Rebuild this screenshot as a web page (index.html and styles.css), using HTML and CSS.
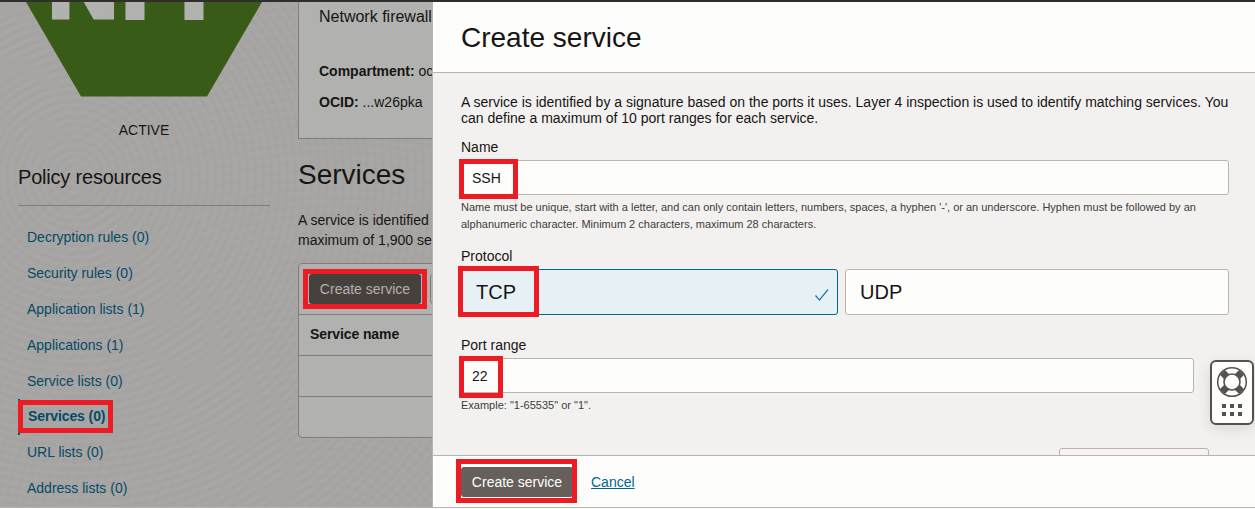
FILE: index.html
```html
<!DOCTYPE html>
<html lang="en">
<head>
<meta charset="utf-8">
<title>Create service</title>
<link rel="stylesheet" href="styles.css">
</head>
<body>
<div class="app">
  <aside class="sidebar">
    <svg class="badge" width="298" height="95" viewBox="0 2 298 95">
      <polygon points="26,2 262,2 207,96.5 81,96.5" fill="#385c18"/>
      <text class="badge-text" x="48 121.5 180.5" y="16.5">NFP</text>
    </svg>
    <div class="status">ACTIVE</div>
    <h2 class="side-title">Policy resources</h2>
    <nav class="links">
      <a>Decryption rules (0)</a>
      <a>Security rules (0)</a>
      <a>Application lists (1)</a>
      <a>Applications (1)</a>
      <a>Service lists (0)</a>
      <a class="current">Services (0)<span class="mark mark-nav"></span></a>
      <a>URL lists (0)</a>
      <a>Address lists (0)</a>
    </nav>
  </aside>
  <main class="main">
    <section class="info">
      <p class="info-name">Network firewall</p>
      <p><b>Compartment:</b> oc</p>
      <p><b>OCID:</b> ...w26pka</p>
    </section>
    <h1 class="main-title">Services</h1>
    <p class="main-text">A service is identified<br>maximum of 1,900 se</p>
    <section class="table">
      <div class="toolbar">
        <button class="btn btn-dim">Create service<span class="mark mark-create"></span></button>
        <button class="btn-next"></button>
      </div>
      <div class="row head">Service name</div>
      <div class="row"></div>
      <div class="row last"></div>
    </section>
  </main>
  <section class="drawer">
    <header class="drawer-head"><h2>Create service</h2></header>
    <div class="drawer-body">
      <p class="intro">A service is identified by a signature based on the ports it uses. Layer 4 inspection is used to identify matching services. You<br>can define a maximum of 10 port ranges for each service.</p>
      <div class="label">Name</div>
      <div class="field">SSH<span class="mark mark-name"></span></div>
      <p class="help">Name must be unique, start with a letter, and can only contain letters, numbers, spaces, a hyphen '-', or an underscore. Hyphen must be followed by an<br>alphanumeric character. Minimum 2 characters, maximum 28 characters.</p>
      <div class="label protocol">Protocol</div>
      <div class="cards">
        <div class="card selected">TCP
          <svg class="check" width="16" height="14" viewBox="0 0 16 14"><path d="M1.5 7.5 5.5 12 14 1.5" fill="none" stroke="#227e9e" stroke-width="1.2"/></svg>
          <span class="mark mark-tcp"></span>
        </div>
        <div class="card">UDP</div>
      </div>
      <div class="label port">Port range</div>
      <div class="field short">22<span class="mark mark-port"></span></div>
      <p class="help">Example: "1-65535" or "1".</p>
      <div class="another"></div>
    </div>
    <footer class="drawer-foot">
      <button class="btn">Create service<span class="mark mark-submit"></span></button>
      <a class="cancel">Cancel</a>
    </footer>
  </section>
  <div class="support">
    <svg width="40" height="61" viewBox="0 0 40 61">
      <g fill="none" stroke="#56514d">
        <path d="M10.4 10.4 15 15M29.6 10.4 25 15M10.4 29.6 15 25M29.6 29.6 25 25" stroke-width="7"/>
        <circle cx="20" cy="20" r="14.3" stroke-width="1.5"/>
        <circle cx="20" cy="20" r="8" stroke-width="1.6" fill="#fdfdfb"/>
      </g>
      <path fill="#56514d" d="M10 42h4v4h-4zM18 42h4v4h-4zM26 42h4v4h-4zM10 50h4v4h-4zM18 50h4v4h-4zM26 50h4v4h-4z"/>
    </svg>
  </div>
</div>
</body>
</html>
```
FILE: styles.css
```css
* { box-sizing: border-box; }
body { margin: 0; background: #fdfdfb; font: 14px/16px "Liberation Sans", Arial, sans-serif; color: #161513; }
h1, h2, p { margin: 0; font-weight: 400; }
button { font: inherit; border: 0; }
.app {
  position: relative;
  display: grid;
  grid-template-columns: 298px 134px 823px;
  width: 1255px;
  height: 508px;
  overflow: hidden;
  border-top: 2px solid #312d2a;
  border-bottom: 1px solid #b9b3ac;
  background:
    repeating-radial-gradient(circle at 75px 175px, #0000 0 1px, #00000005 4px, #0000 8px),
    repeating-radial-gradient(circle at 330px 560px, #0000 0 1px, #00000003 5px, #0000 9px),
    #a8a7a5;
}
.sidebar { min-width: 0; }
.badge { display: block; }
.badge-text { font: bold 97px "Liberation Sans", Arial, sans-serif; fill: #b1b1b0; stroke: #b1b1b0; stroke-width: 5px; }
.status { width: 288px; margin-top: 25px; text-align: center; }
.side-title { width: 252px; margin: 27px 0 0 18px; padding-bottom: 16px; border-bottom: 1px solid #7f7d7b; font-size: 20px; line-height: 24px; letter-spacing: -.2px; }
.links { margin: 13px 0 0 18px; display: flex; flex-direction: column; }
.links a { position: relative; flex: 0 0 35.86px; padding-left: 9px; line-height: 36px; color: #054a67; }
.links .current { font-weight: 700; border-left: 2px solid #054a67; padding-left: 8px; letter-spacing: -.1px; }
.links .current, .links .current ~ a { line-height: 34px; }

.main { overflow: hidden; }
.info { height: 137px; padding: 5px 0 0 20px; border: 1px solid #7f7d7b; border-top: 0; border-right: 0; background: #b1b1af; white-space: nowrap; }
.info p { line-height: 20px; margin-bottom: 11px; }
.info .info-name { font-size: 16px; margin-bottom: 34px; }
.main-title { margin-top: 20px; font-size: 28px; line-height: 32px; }
.main-text { margin-top: 19px; line-height: 20px; white-space: nowrap; }
.table { margin-top: 13px; width: 300px; border: 1px solid #7f7d7b; border-radius: 4px; background: #b1b1af; }
.toolbar { display: flex; gap: 9px; height: 51px; padding: 10px; border-bottom: 1px solid #7f7d7b; }
.btn { position: relative; width: 112px; height: 30px; padding: 0; border-radius: 3px; background: #665f5b; color: #fff; }
.btn-dim { background: #47413e; color: #b1b1af; }
.btn-next { width: 60px; height: 30px; border: 1px solid #7f7d7b; border-radius: 3px; background: #b1b1af; }
.row { height: 41px; border-bottom: 1px solid #7f7d7b; }
.head { padding-left: 11px; line-height: 39px; font-weight: 700; letter-spacing: -.1px; }
.last { height: 40px; border-bottom: 0; }

.drawer { display: flex; flex-direction: column; min-width: 0; border-left: 1px solid #b9b3ac; background: #fdfdfb; }
.drawer-head { height: 71px; padding: 20px 28px 18px; border-bottom: 1px solid #b9b3ac; }
.drawer-head h2 { font-size: 28px; line-height: 32px; }
.drawer-body { height: 382px; padding: 21px 26px 0 28px; overflow: hidden; background: #f3f1f0; }
.intro { white-space: nowrap; }
.label { margin-top: 13px; }
.field { position: relative; height: 35px; margin-top: 5px; padding-left: 10px; border: 1px solid #bab4ad; border-radius: 3px; background: #fdfdfb; line-height: 34px; }
.short { width: 733px; }
.help { margin-top: 4px; font-size: 11px; line-height: 17px; color: #403c39; white-space: nowrap; }
.protocol { margin-top: 15px; }
.cards { display: grid; grid-template-columns: 377px 384px; gap: 7px; margin-top: 5px; }
.card { position: relative; height: 46px; padding-left: 14px; border: 1px solid #bab4ad; border-radius: 3px; background: #fdfdfb; font-size: 20px; line-height: 44px; }
.selected { display: flex; justify-content: space-between; border-color: #00688c; background: #e5f1f4; }
.check { margin: 18px 7px 0 0; }
.port { margin-top: 22px; }
.another { width: 150px; height: 32px; margin: 34px 0 0 598px; border: 1px solid #bab4ad; border-radius: 3px; background: #f5f4f2; }
.drawer-foot { display: flex; align-items: center; gap: 18px; flex: 1; padding: 0 28px; border-top: 1px solid #b9b3ac; }
.cancel { color: #00688c; text-decoration: underline; }

/* Callout frames sit over the controls they highlight. */
.mark { position: absolute; border: 5px solid #ed1c24; }
.mark-nav { left: -2px; top: 1px; width: 95px; height: 33px; }
.mark-create { left: -6px; top: -5px; width: 124px; height: 40px; }
.mark-name { left: -3px; top: -2px; width: 59px; height: 40px; }
.mark-tcp { left: -4px; top: -4px; width: 81px; height: 51px; }
.mark-port { left: -3px; top: -3px; width: 44px; height: 42px; }
.mark-submit { left: -5px; top: -8px; width: 121px; height: 44px; }

.support { position: absolute; right: 1px; top: 358px; width: 44px; height: 65px; border: 2px solid #56514d; border-radius: 6px; background: #fdfdfb; box-shadow: 0 4px 14px #0000001c; }
.support svg { display: block; }
```
